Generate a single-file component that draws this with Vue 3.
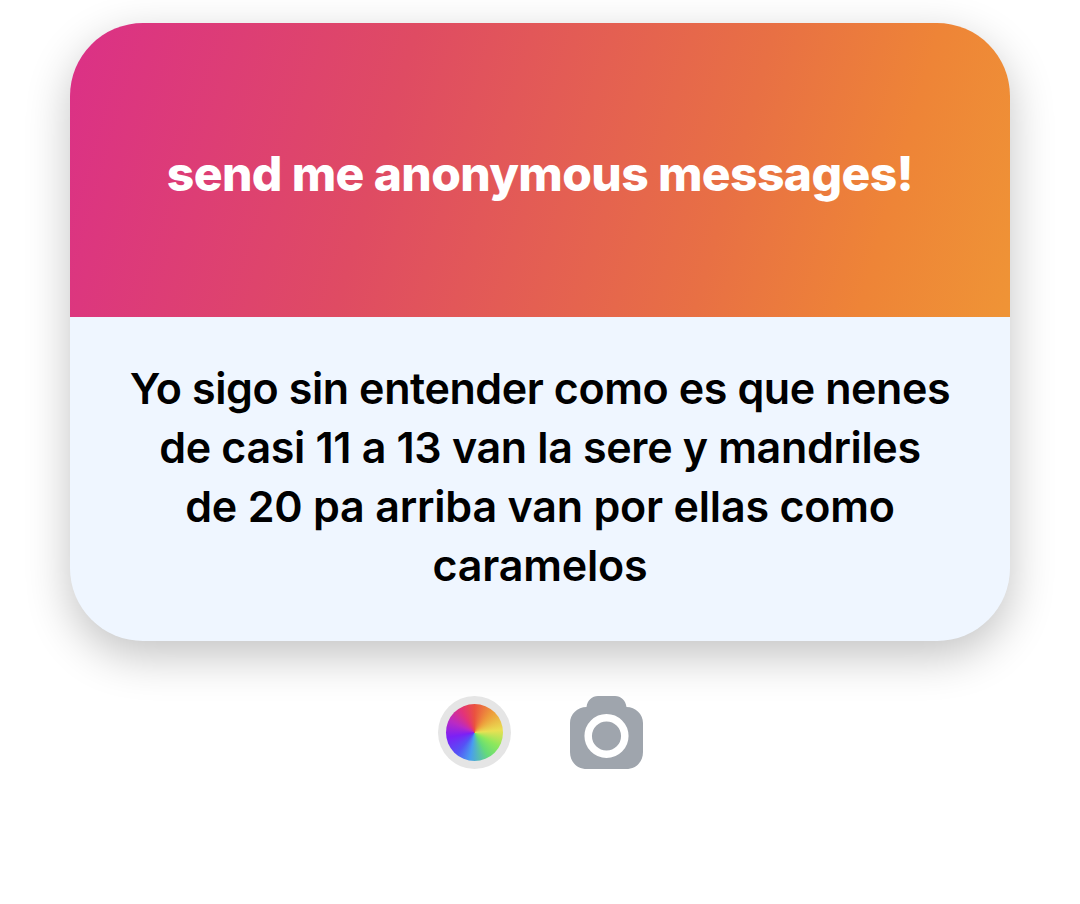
<template>
  <main class="page">
    <section class="card">
      <header class="card-header">
        <h1>send me anonymous messages!</h1>
      </header>
      <div class="card-body">
        <p class="message">
          <span
            v-for="(line, index) in messageLines"
            :key="index"
            class="message-line"
            :style="{ letterSpacing: line.spacing + 'px' }"
          >{{ line.text }}</span>
        </p>
      </div>
    </section>

    <div class="actions">
      <button class="action-button color-button" aria-label="Color">
        <span class="color-wheel"></span>
      </button>
      <button class="action-button" aria-label="Camera">
        <svg width="73" height="73" viewBox="0 0 73 73">
          <path
            fill="#9fa5ad"
            d="M28 0H45C51 0 55.5 4 56.5 11C65.5 11 73 18 73 27V56C73 66 66 73 56 73H17C7 73 0 66 0 56V27C0 18 7.500 11 16.500 11C17.500 4 22 0 28 0Z"
          />
          <circle cx="36.500" cy="40" r="18.300" fill="none" stroke="#fff" stroke-width="7.500" />
        </svg>
      </button>
    </div>
  </main>
</template>

<script setup>
// Chaque ligne garde son propre interlettrage
const messageLines = [
  { text: 'Yo sigo sin entender como es que nenes', spacing: -0.41 },
  { text: 'de casi 11 a 13 van la sere y mandriles', spacing: -0.34 },
  { text: 'de 20 pa arriba van por ellas como', spacing: -0.2 },
  { text: 'caramelos', spacing: -0.2 }
];
</script>

<style>
body {
  margin: 0;
  background-color: #fff;
}
</style>

<style scoped>
.page {
  box-sizing: border-box;
  width: 1080px;
  height: 904px;
  padding-top: 23px;
  display: flex;
  flex-direction: column;
  align-items: center;
  overflow: hidden;
  font-family: Inter, "Liberation Sans", sans-serif;
}

.card {
  width: 940px;
  border-radius: 73px;
  overflow: hidden;
  background-color: #eff6ff;
  box-shadow: 0 15px 45px rgba(0, 0, 0, 0.24);
}

.card-header {
  height: 294px;
  display: flex;
  justify-content: center;
  align-items: center;
  background: linear-gradient(106deg, #db3087 0%, #df4b63 34%, #e87044 69%, #ee8437 85%, #ef9436 100%);
}

.card-header h1 {
  margin: 0;
  padding-top: 8px;
  color: #fff;
  font-size: 48px;
  font-weight: 800;
  line-height: 58px;
  letter-spacing: -0.62px;
  white-space: nowrap;
}

.card-body {
  box-sizing: border-box;
  height: 324px;
  padding-top: 42px;
}

.message {
  margin: 0;
  color: #000;
  font-size: 43px;
  font-weight: 600;
  line-height: 59px;
  text-align: center;
}

.message-line {
  display: block;
  white-space: nowrap;
}

.actions {
  display: flex;
  gap: 59px;
  margin-top: 55px;
}

.action-button {
  width: 73px;
  height: 73px;
  padding: 0;
  border: none;
  background: none;
  cursor: pointer;
}

.action-button svg {
  display: block;
}

.color-button {
  display: flex;
  justify-content: center;
  align-items: center;
  border-radius: 50%;
  background-color: #e5e5e5;
}

.color-wheel {
  width: 57px;
  height: 57px;
  border-radius: 50%;
  background: conic-gradient(
    #ea5140,
    #ed9a3b 40deg,
    #e9e053 85deg,
    #8de85c 120deg,
    #65db78 150deg,
    #489df0 190deg,
    #5552f5 220deg,
    #7c20f5 260deg,
    #b92ac5 295deg,
    #e33378 330deg,
    #ea5140 360deg
  );
}
</style>
